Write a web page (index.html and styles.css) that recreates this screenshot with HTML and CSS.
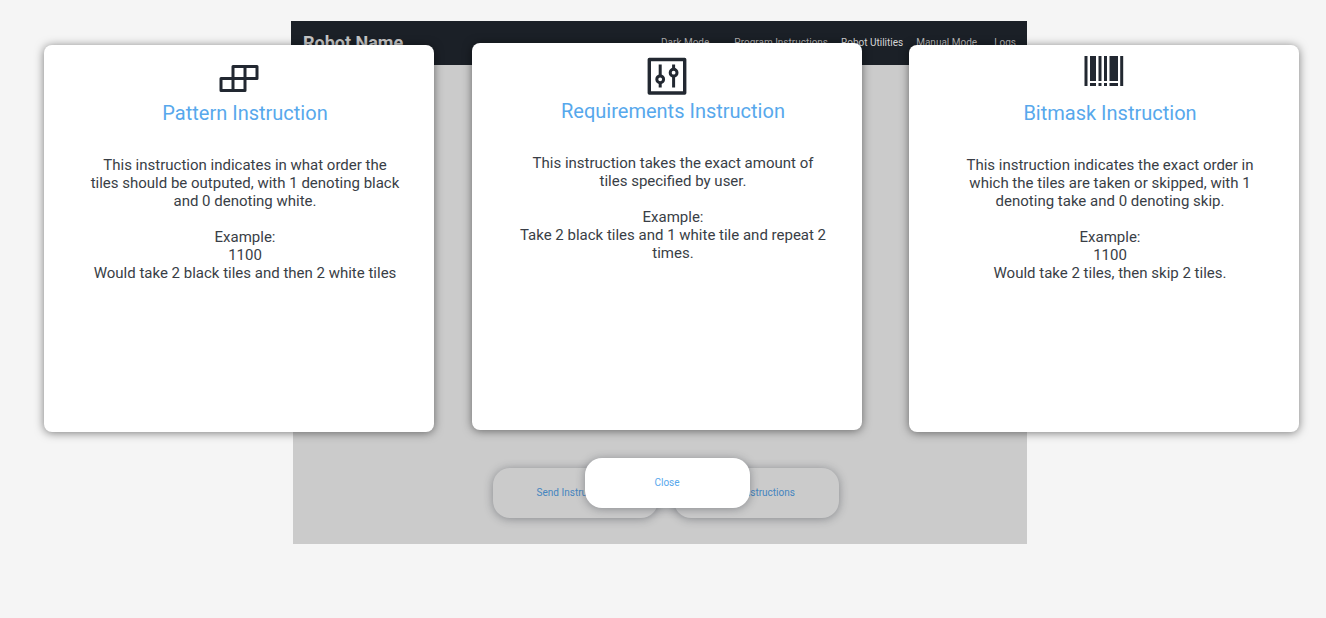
FILE: index.html
```html
<!DOCTYPE html>
<html lang="en">
<head>
<meta charset="utf-8">
<title>Robot Name</title>
<link rel="stylesheet" href="styles.css">
</head>
<body>
<div class="frame">
  <header class="topbar">
    <h1 class="brand">Robot Name</h1>
    <nav class="nav">
      <a class="nav-link nav-mode" href="#">Dark Mode</a>
      <a class="nav-link" href="#">Program Instructions</a>
      <a class="nav-link nav-current" href="#">Robot Utilities</a>
      <a class="nav-link" href="#">Manual Mode</a>
      <a class="nav-link nav-logs" href="#">Logs</a>
    </nav>
  </header>
  <main class="workspace">
    <button class="pill pill-dim" type="button">Send Instructions</button>
    <button class="pill pill-dim" type="button">Save Instructions</button>
  </main>
</div>

<div class="overlay" role="dialog" aria-label="Instruction help">
  <div class="cards">
    <section class="card">
      <svg class="icon" viewBox="0 0 40 44" aria-hidden="true">
        <g fill="none" stroke="#222831" stroke-width="3" stroke-linejoin="round">
          <path d="M14 23.500V11.500H38V23.500H26V35.500H2V23.500H26V11.500M14 23.500V35.500"/>
        </g>
      </svg>
      <div class="card-body">
        <h2 class="card-title">Pattern Instruction</h2>
        <p class="card-text">This instruction indicates in what order the tiles should be outputed, with 1 denoting black and 0 denoting white.</p>
        <p class="card-text">Example:<br>1100<br>Would take 2 black tiles and then 2 white tiles</p>
      </div>
    </section>
    <section class="card card-middle">
      <svg class="icon" viewBox="0 0 40 44" aria-hidden="true">
        <g fill="none" stroke="#222831" stroke-width="3">
          <rect x="2.300" y="6.500" width="35.400" height="33.500" stroke-width="3.400" stroke-linejoin="round"/>
          <path d="M13.200 11.500V22.500M13.200 30V34.500M26.600 11.500V16M26.600 23V34.500"/>
          <circle cx="13.200" cy="26.300" r="3.400"/>
          <circle cx="26.600" cy="19.700" r="3.400"/>
        </g>
      </svg>
      <div class="card-body">
        <h2 class="card-title">Requirements Instruction</h2>
        <p class="card-text">This instruction takes the exact amount of tiles specified by user.</p>
        <p class="card-text">Example:<br>Take 2 black tiles and 1 white tile and repeat 2 times.</p>
      </div>
    </section>
    <section class="card">
      <svg class="icon" viewBox="0 0 40 44" aria-hidden="true">
        <path fill="#222831" d="M.5 1h3v30h-3zM6 1h6v25H6zM14.500 1h3v25h-3zM20 1h3v25h-3zM25.500 1h8.500v25h-8.500zM36.200 1h3v30h-3zM6 28h6v3H6zM14.500 28h3v3h-3zM20 28h3v3h-3zM25.500 28h8.500v3h-8.500z"/>
      </svg>
      <div class="card-body">
        <h2 class="card-title">Bitmask Instruction</h2>
        <p class="card-text">This instruction indicates the exact order in which the tiles are taken or skipped, with 1 denoting take and 0 denoting skip.</p>
        <p class="card-text">Example:<br>1100<br>Would take 2 tiles, then skip 2 tiles.</p>
      </div>
    </section>
  </div>
  <div class="actions">
    <button class="pill" type="button">Close</button>
  </div>
</div>
</body>
</html>
```
FILE: styles.css
```css
* {
  box-sizing: border-box;
}

body {
  margin: 0;
  padding: 21px 8px 0 0;
  background: #f5f5f5;
  font-family: Roboto, sans-serif;
}

.frame {
  display: flex;
  flex-direction: column;
  max-width: 736px;
  min-height: 523px;
  margin: 0 auto;
}

.topbar {
  display: flex;
  align-items: center;
  justify-content: space-between;
  min-height: 44px;
  padding: 0 11px 0 12px;
  background: #1b2027;
}

.brand {
  margin: 0;
  font-size: 18px;
  line-height: 22px;
  font-weight: 700;
  color: #c6c6c6;
}

.nav {
  display: flex;
  gap: 13px;
}

.nav-link {
  font-size: 10px;
  line-height: 12px;
  color: #b4b4b4;
  text-decoration: none;
}

.nav-mode {
  margin-right: 12px;
}

.nav-current {
  color: #d6d6d6;
}

.nav-logs {
  margin-left: 4px;
}

.workspace {
  display: flex;
  flex: 1;
  align-items: flex-end;
  justify-content: center;
  gap: 16px;
  margin-left: 2px;
  padding: 0 0 26px 12px;
  background: #cbcbcb;
}

.overlay {
  position: absolute;
  inset: 0;
  padding: 43px 27px 0 44px;
}

.cards {
  display: flex;
  align-items: flex-start;
  gap: 38px;
}

.card {
  flex: 1 1 0;
  min-height: 387px;
  margin-top: 2px;
  padding: 10px 0 18px;
  border-radius: 8px;
  background: #fff;
  box-shadow: 0 1px 10px rgba(0, 0, 0, 0.5);
  text-align: center;
}

.card-middle {
  margin-top: 0;
  margin-right: 9px;
}

.icon {
  display: block;
  width: 40px;
  height: 44px;
  margin: 0 auto;
}

.card-body {
  padding: 0 33px 0 45px;
}

.card-title {
  margin: 0 0 29px;
  font-size: 20px;
  line-height: 28px;
  font-weight: 400;
  color: #57a8ec;
}

.card-text {
  margin: 0 0 18px;
  font-size: 15px;
  line-height: 18px;
  color: #393e46;
}

.actions {
  display: flex;
  justify-content: center;
  margin-top: 26px;
  padding-right: 9px;
}

.pill {
  width: 165px;
  height: 50px;
  padding: 0 0 2px;
  border: 0;
  border-radius: 17px;
  background: #fff;
  box-shadow: 0 1px 10px rgba(34, 40, 49, 0.4);
  font-family: inherit;
  font-size: 10px;
  color: #57a8ec;
}

.pill-dim {
  background: #cbcbcb;
  color: #4585bf;
}
```
